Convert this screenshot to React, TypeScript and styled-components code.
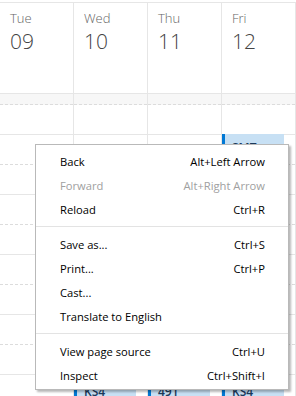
import styled, { createGlobalStyle } from "styled-components";

const GlobalStyle = createGlobalStyle`
  html, body {
    margin: 0;
    padding: 0;
    background: #fff;
    overflow: hidden;
  }
  body {
    font-family: "Open Sans", "Noto Sans", sans-serif;
  }
`;

const Page = styled.div`
  position: relative;
  width: 296px;
  height: 396px;
  overflow: hidden;
  padding-top: 2px;
  box-sizing: border-box;
`;

const Week = styled.div`
  display: grid;
  grid-template-columns: repeat(4, 74px);
  border-top: 1px solid #e6e6e6;
`;

const DayColumn = styled.div`
  display: flex;
  flex-direction: column;
  border-right: 1px solid #e6e6e6;
`;

const DayHeader = styled.div`
  height: 91px;
  padding: 6px 0 0 10px;
  box-sizing: border-box;
  border-bottom: 1px solid #e6e6e6;
  color: #555;
`;

const DayName = styled.div`
  font-size: 13px;
  line-height: 18px;
  font-weight: 300;
  color: #666;
`;

const DayNumber = styled.div`
  font-size: 21px;
  line-height: 28px;
  font-weight: 300;
  color: #444;
`;

const AllDayBand = styled.div`
  height: 10px;
  background: #f7f7f7;
  border-bottom: 1px dashed #dcdcdc;
`;

const Slots = styled.div`
  position: relative;
  display: grid;
  grid-template-rows: repeat(10, 30px);
`;

const Slot = styled.div<{ $half: boolean }>`
  border-bottom: 1px ${(p) => (p.$half ? "dashed #dcdcdc" : "solid #e6e6e6")};
`;

const Event = styled.div<{ $row: number }>`
  position: absolute;
  left: 0;
  width: 62px;
  top: ${(p) => p.$row * 30 - 1}px;
  height: 56px;
  background: #c7e0f4;
  border-left: 3px solid #0078d4;
  box-sizing: border-box;
  padding: ${(p) => (p.$row > 5 ? "11px" : "7px")} 0 0 7px;
  font-size: 12px;
  line-height: 14px;
  color: #1b3a5c;
  font-weight: 600;
`;

const Menu = styled.div`
  position: absolute;
  left: 35px;
  top: 144px;
  width: 254px;
  background: #fff;
  border: 1px solid #b9b9b9;
  box-sizing: border-box;
  padding: 4px 0 2px;
  box-shadow: 2px 2px 2px rgba(0, 0, 0, 0.28);
  font-size: 11.2px;
  color: #000;
`;

const Item = styled.div<{ $disabled?: boolean }>`
  display: flex;
  justify-content: space-between;
  align-items: center;
  height: 24px;
  padding: 0 23px 0 24px;
  color: ${(p) => (p.$disabled ? "#a0a0a0" : "#000")};
`;

const Separator = styled.div`
  height: 1px;
  margin: 5px 0 5px 0;
  background: #e3e3e3;
`;

const days = [
  { name: "Tue", num: "09", events: [] as { row: number; title: string }[] },
  { name: "Wed", num: "10", events: [{ row: 9, title: "KS4" }] },
  { name: "Thu", num: "11", events: [{ row: 9, title: "491" }] },
  {
    name: "Fri",
    num: "12",
    events: [
      { row: 1, title: "SMT" },
      { row: 9, title: "KS4" },
    ],
  },
];

const menu: ({ label: string; key?: string; disabled?: boolean } | null)[] = [
  { label: "Back", key: "Alt+Left Arrow" },
  { label: "Forward", key: "Alt+Right Arrow", disabled: true },
  { label: "Reload", key: "Ctrl+R" },
  null,
  { label: "Save as...", key: "Ctrl+S" },
  { label: "Print...", key: "Ctrl+P" },
  { label: "Cast..." },
  { label: "Translate to English" },
  null,
  { label: "View page source", key: "Ctrl+U" },
  { label: "Inspect", key: "Ctrl+Shift+I" },
];

export default function App() {
  return (
    <>
      <GlobalStyle />
      <Page>
        <Week>
          {days.map((d) => (
            <DayColumn key={d.name}>
              <DayHeader>
                <DayName>{d.name}</DayName>
                <DayNumber>{d.num}</DayNumber>
              </DayHeader>
              <AllDayBand />
              <Slots>
                {Array.from({ length: 10 }).map((_, i) => (
                  <Slot key={i} $half={i % 2 === 1} />
                ))}
                {d.events.map((e) => (
                  <Event key={e.row} $row={e.row}>
                    {e.title}
                  </Event>
                ))}
              </Slots>
            </DayColumn>
          ))}
        </Week>
        <Menu>
          {menu.map((m, i) =>
            m ? (
              <Item key={i} $disabled={m.disabled}>
                <span>{m.label}</span>
                {m.key && <span>{m.key}</span>}
              </Item>
            ) : (
              <Separator key={i} />
            )
          )}
        </Menu>
      </Page>
    </>
  );
}
